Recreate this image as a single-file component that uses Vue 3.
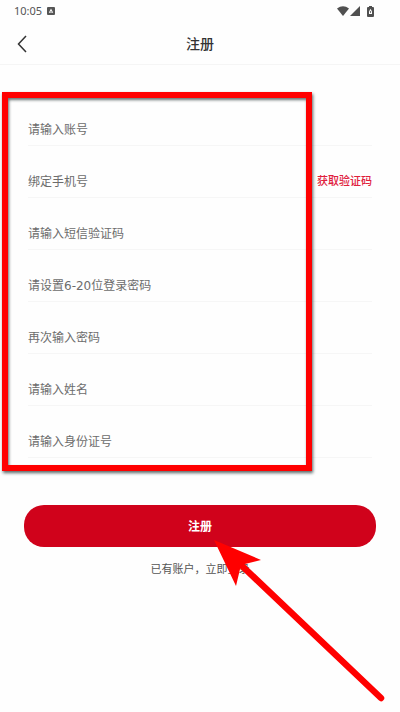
<script setup>
import { reactive } from 'vue'

const fields = [
  { name: 'account', type: 'text', label: '请输入账号' },
  { name: 'phone', type: 'tel', label: '绑定手机号', action: '获取验证码' },
  { name: 'code', type: 'text', label: '请输入短信验证码' },
  { name: 'password', type: 'password', label: '请设置6-20位登录密码' },
  { name: 'confirm', type: 'password', label: '再次输入密码' },
  { name: 'realname', type: 'text', label: '请输入姓名' },
  { name: 'idcard', type: 'text', label: '请输入身份证号' },
]

const form = reactive(Object.fromEntries(fields.map((f) => [f.name, ''])))
</script>

<template>
  <div class="screen">
    <div class="status">
      <span class="time">10:05</span>
      <svg class="app" width="8" height="8" viewBox="0 0 8 8" aria-hidden="true">
        <rect width="8" height="8" rx="1" fill="#555" />
        <path d="M4 1.6 6.2 5.8H1.8Z" fill="#fff" />
        <path d="M3.4 4h1.2v1.8H3.4z" fill="#888" />
      </svg>
      <svg class="wifi" width="12" height="10" viewBox="0 0 12 10" aria-hidden="true">
        <path d="M0 2.6Q6-2 12 2.6L6 10Z" fill="#505050" />
      </svg>
      <svg width="10" height="10" viewBox="0 0 10 10" aria-hidden="true">
        <path d="M10 0V10H0Z" fill="#505050" />
      </svg>
      <svg class="battery" width="7" height="11" viewBox="0 0 7 11" aria-hidden="true">
        <path d="M2 0h3v1h1q1 0 1 1v8q0 1-1 1H1q-1 0-1-1V2q0-1 1-1h1z" fill="#505050" />
        <path d="M3.5 2.8 5 5.6V8H2V5.6Z" fill="#fff" />
        <path d="M3 5h1v2H3z" fill="#777" />
      </svg>
    </div>

    <header class="bar">
      <button class="back" type="button" aria-label="返回">
        <svg width="10" height="18" viewBox="0 0 10 18" aria-hidden="true">
          <path d="M9 1 1.5 9 9 17" fill="none" stroke="#333" stroke-width="1.5" />
        </svg>
      </button>
      <h1>注册</h1>
    </header>

    <form @submit.prevent>
      <div class="fields">
        <div v-for="f in fields" :key="f.name" class="row">
          <input
            :id="f.name"
            v-model="form[f.name]"
            :type="f.type"
            :placeholder="f.label"
            :aria-label="f.label"
          />
          <button v-if="f.action" class="code" type="button">{{ f.action }}</button>
        </div>
        <div class="frame"></div>
      </div>

      <div class="actions">
        <button class="submit" type="submit">注册</button>
        <a class="login" href="#">已有账户，立即登录</a>
        <svg class="arrow" width="172" height="164" viewBox="0 0 172 164" aria-hidden="true">
          <path d="M26 24 167 158" stroke="#f00" stroke-width="6.5" stroke-linecap="round" />
          <path d="M0 0 47 20 27 25 22 46Z" fill="#f00" />
        </svg>
      </div>
    </form>
  </div>
</template>

<style>
body {
  background: #fefefe;
}
</style>

<style scoped>
.screen {
  overflow: hidden;
  min-height: 100vh;
  color: #333;
  font-family: "Noto Sans", "Noto Sans CJK SC", sans-serif;
}

button,
input {
  padding: 0;
  border: 0;
  background: none;
  font-family: inherit;
}

.status {
  display: flex;
  align-items: center;
  height: 22px;
  padding: 0 26px 0 14px;
}

.time {
  color: #555;
  font-size: 11px;
  line-height: 22px;
}

.app {
  margin-left: 5px;
}

.wifi {
  margin-left: auto;
}

.wifi + svg {
  margin-left: 1px;
}

.battery {
  margin-left: 7px;
}

.bar {
  display: grid;
  grid-template-columns: 28px 1fr 28px;
  align-items: center;
  height: 40px;
  padding: 2px 8px 0;
  border-bottom: 1px solid #f5f5f5;
}

.back {
  display: grid;
  place-items: center;
  height: 28px;
}

h1 {
  margin: 0;
  font-size: 14px;
  font-weight: 500;
  line-height: 20px;
  text-align: center;
}

.fields {
  position: relative;
  padding: 29px 28px 0;
}

.row {
  display: flex;
  align-items: flex-end;
  height: 52px;
  box-sizing: border-box;
  border-bottom: 1px solid #f6f6f6;
}

input {
  flex: 1;
  min-width: 0;
  height: 30px;
  color: #333;
  font-family: "DejaVu Sans", "Noto Sans CJK SC", sans-serif;
  font-size: 12px;
  outline: none;
}

input::placeholder {
  color: #6c6c6c;
  opacity: 1;
}

.code {
  height: 34px;
  color: #e0203c;
  font-size: 11px;
  font-weight: 500;
}

.frame {
  position: absolute;
  inset: 27px 88px -13px 2px;
  border: 6px solid #f00;
  box-shadow:
    1px 2px 3px rgba(0, 20, 20, 0.65),
    inset 1px 2px 3px rgba(0, 20, 20, 0.6);
  pointer-events: none;
}

.actions {
  position: relative;
  display: flex;
  flex-direction: column;
  align-items: center;
  gap: 14px;
  padding: 47px 24px 0;
}

.submit {
  width: 100%;
  height: 42px;
  border-radius: 20px;
  background: #d0021b;
  color: #fff;
  font-size: 12px;
  font-weight: 700;
}

.login {
  color: #555;
  font-size: 11px;
  line-height: 16px;
  text-decoration: none;
}

.arrow {
  position: absolute;
  top: 82px;
  left: calc(50% + 14px);
  pointer-events: none;
}
</style>
